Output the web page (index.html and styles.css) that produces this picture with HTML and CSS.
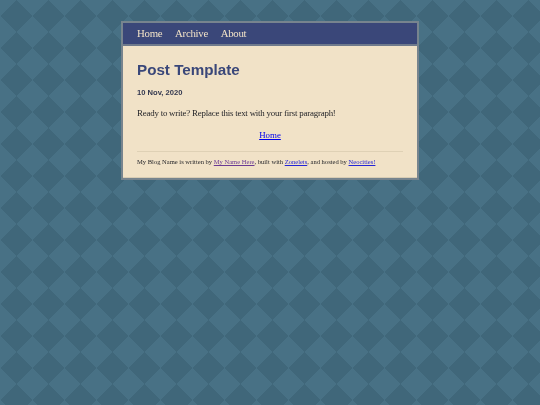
FILE: index.html
```
<!DOCTYPE html>
<html lang="en">
<head>
<meta charset="utf-8">
<title>Post Template</title>
<link rel="stylesheet" href="styles.css">
</head>
<body>
<div class="card">
  <nav class="nav"><a href="#">Home</a><a href="#">Archive</a><a href="#">About</a></nav>
  <main class="content">
    <h1>Post Template</h1>
    <p class="date">10 Nov, 2020</p>
    <p class="text">Ready to write? Replace this text with your first paragraph!</p>
    <p class="home"><a href="#">Home</a></p>
    <hr>
    <p class="foot">My Blog Name is written by <a class="visited" href="#">My Name Here</a>, built with <a href="#">Zonelets</a>, and hosted by <a href="#">Neocities!</a></p>
  </main>
</div>
</body>
</html>
```
FILE: styles.css
```
html, body { margin: 0; padding: 0; }
body {
  height: 405px;
  overflow: hidden;
  background-color: #40677a;
  background-image:
    linear-gradient(135deg, #487185 25%, transparent 25%),
    linear-gradient(225deg, #487185 25%, transparent 25%),
    linear-gradient(45deg, #487185 25%, transparent 25%),
    linear-gradient(315deg, #487185 25%, transparent 25%);
  background-size: 32px 32px;
  font-family: "Liberation Serif", serif;
  color: #26262a;
}
.card {
  box-sizing: border-box;
  width: 298px;
  margin: 21px auto 0;
  border: 2px solid #77848e;
  background: #f1e2c7;
  box-shadow: inset 0 -1px 0 #d8ccb4;
  filter: blur(0.3px);
}
.nav {
  box-sizing: border-box;
  display: flex;
  gap: 12.8px;
  padding: 0 14px 1px;
  height: 23px;
  align-items: center;
  background: #3a4779;
  border-bottom: 2px solid #6f7a8c;
}
.nav a { color: #f1e2c7; text-decoration: none; font-size: 10.8px; letter-spacing: -0.28px; }
.content { padding: 15px 14px 12px; }
h1 {
  margin: 0;
  font: bold 15.2px/18px "Liberation Sans", sans-serif;
  color: #3a4779;
}
.date {
  margin: 9px 0 0;
  font: bold 7.6px/10px "Liberation Sans", sans-serif;
  color: #333850;
}
.text { margin: 9px 0 0; font-size: 8.9px; line-height: 12px; letter-spacing: -0.21px; }
.home { margin: 10px 0 0; font-size: 8.9px; line-height: 12px; text-align: center; }
a { color: #0000ee; }
a.visited { color: #551a8b; }
hr {
  margin: 10px 0 0;
  border: 0;
  height: 1px;
  background: #dfd1b5;
}
.foot { margin: 6px 0 0; font-size: 6.55px; line-height: 8px; }
.foot a { color: #2424d6; }
.foot a.visited { color: #6a3a94; }
```
